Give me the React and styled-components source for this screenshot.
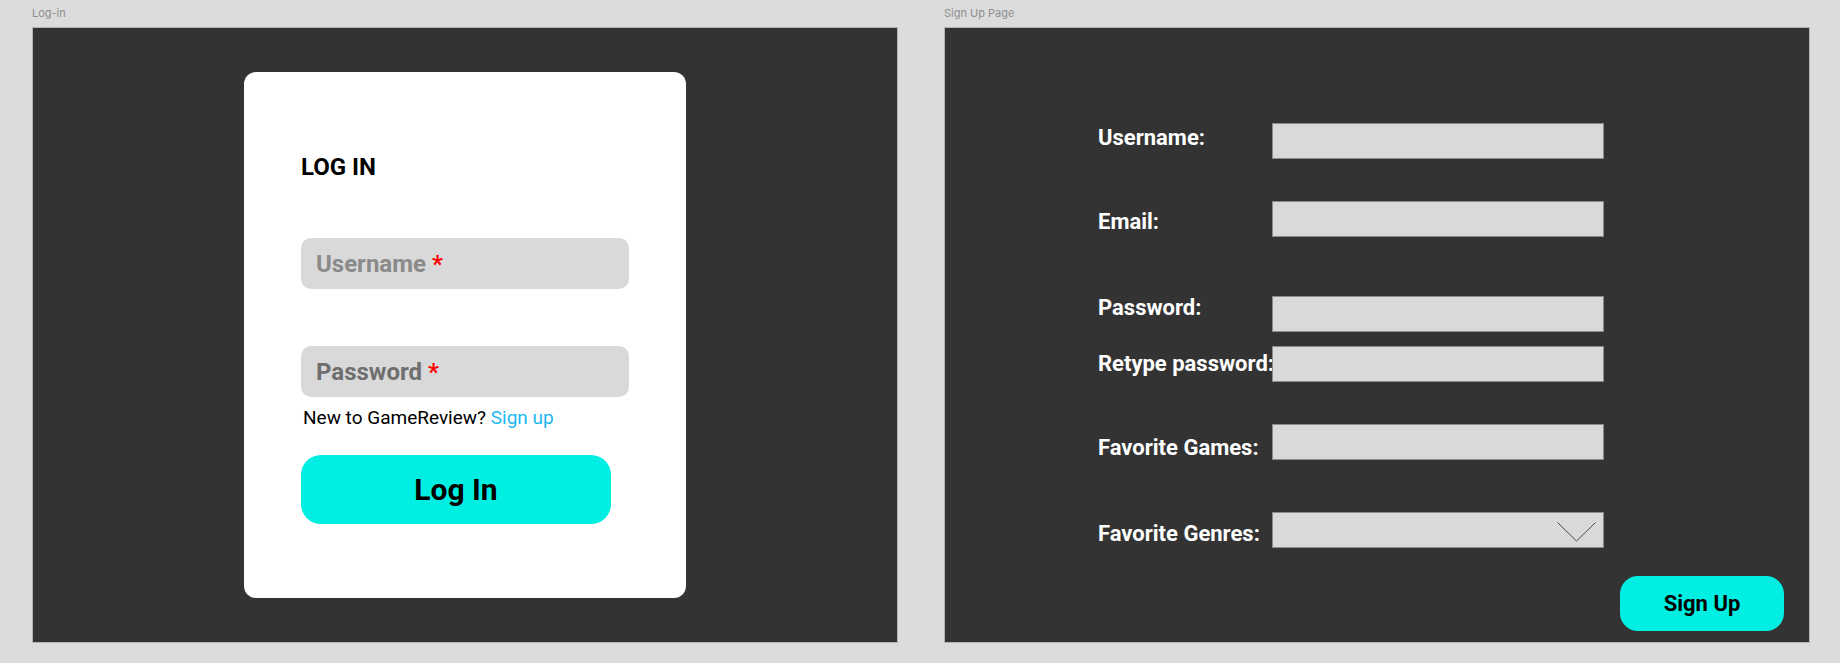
import styled, { createGlobalStyle } from 'styled-components'

const GlobalStyle = createGlobalStyle`
  html, body {
    margin: 0;
    padding: 0;
    background: #dcdcdc;
  }
  body {
    font-family: Roboto, "Liberation Sans", sans-serif;
  }
`

const signupRows = [
  { label: 'Username:', top: 95, shift: 2 },
  { label: 'Email:', top: 42, shift: 8 },
  { label: 'Password:', top: 59, shift: -1 },
  { label: 'Retype password:', top: 14, shift: 5 },
  { label: 'Favorite Games:', top: 42, shift: 11 },
  { label: 'Favorite Genres:', top: 51, shift: 9, select: true },
]

const App = () => {
  return (
    <>
      <GlobalStyle />
      <Canvas>
        <Board>
          <Caption>Log-in</Caption>
          <Frame $center>
            <Card>
              <Heading>LOG IN</Heading>
              <Field $gap={57} $tone="#8a8a8a">
                Username <Star>*</Star>
              </Field>
              <Field $gap={57} $tone="#6f6f6f">
                Password <Star>*</Star>
              </Field>
              <Hint>
                New to GameReview? <HintLink>Sign up</HintLink>
              </Hint>
              <LoginButton>Log In</LoginButton>
            </Card>
          </Frame>
        </Board>

        <Board>
          <Caption>Sign Up Page</Caption>
          <Frame>
            <Form>
              {signupRows.map(row => (
                <Row key={row.label} $top={row.top}>
                  <Label $shift={row.shift}>{row.label}</Label>
                  <Box $select={row.select}>
                    {row.select && (
                      <svg width="39" height="20" viewBox="0 0 39 20">
                        <polyline
                          points="0.5,0.5 19.5,19 38.5,0.5"
                          fill="none"
                          stroke="#4a4a4a"
                          strokeWidth="1"
                        />
                      </svg>
                    )}
                  </Box>
                </Row>
              ))}
            </Form>
            <SignUpButton>Sign Up</SignUpButton>
          </Frame>
        </Board>
      </Canvas>
    </>
  )
}

export default App

const Canvas = styled.div`
  display: flex;
  gap: 46px;
  padding-left: 32px;
`

const Board = styled.div`
  display: flex;
  flex-direction: column;
`

const Caption = styled.div`
  box-sizing: border-box;
  height: 27px;
  padding-top: 7px;
  font-family: Inter, "Liberation Sans", sans-serif;
  font-size: 11px;
  line-height: 13px;
  color: #8e8e8e;
`

const Frame = styled.div`
  box-sizing: border-box;
  width: 866px;
  height: 616px;
  background: #333333;
  border: 1px solid #b4b4b4;
  display: flex;
  flex-direction: column;
  ${p => p.$center && `
    align-items: center;
    justify-content: center;
  `}
`

const Card = styled.div`
  box-sizing: border-box;
  width: 442px;
  height: 526px;
  background: #ffffff;
  border-radius: 12px;
  padding: 81px 57px 0;
  display: flex;
  flex-direction: column;
`

const Heading = styled.div`
  font-size: 24px;
  line-height: 28px;
  font-weight: 700;
  color: #000;
`

const Field = styled.div`
  box-sizing: border-box;
  width: 328px;
  height: 51px;
  margin-top: ${p => p.$gap}px;
  padding-left: 15px;
  border-radius: 10px;
  background: #d9d9d9;
  display: flex;
  align-items: center;
  gap: 6px;
  font-size: 24px;
  font-weight: 700;
  color: ${p => p.$tone};
`

const Star = styled.span`
  color: #ff0000;
`

const Hint = styled.div`
  margin-top: 9px;
  padding-left: 2px;
  font-size: 19px;
  line-height: 24px;
  color: #000;
`

const HintLink = styled.span`
  color: #1cb8f2;
`

const LoginButton = styled.button`
  margin-top: 25px;
  width: 310px;
  height: 69px;
  border: none;
  border-radius: 20px;
  background: #00efe2;
  font-family: Roboto, "Liberation Sans", sans-serif;
  font-size: 30px;
  font-weight: 700;
  color: #000;
  padding: 0;
`

const Form = styled.div`
  display: flex;
  flex-direction: column;
  padding-left: 153px;
`

const Row = styled.div`
  display: flex;
  align-items: flex-start;
  margin-top: ${p => p.$top}px;
`

const Label = styled.div`
  width: 174px;
  margin-top: ${p => p.$shift}px;
  font-size: 22px;
  line-height: 26px;
  font-weight: 700;
  color: #ffffff;
  white-space: nowrap;
`

const Box = styled.div`
  box-sizing: border-box;
  width: 332px;
  height: 36px;
  background: #d9d9d9;
  border: 1px solid #8a8a8a;
  display: flex;
  justify-content: flex-end;
  align-items: flex-start;
  padding: 9px 7px 0 0;
`

const SignUpButton = styled.button`
  align-self: flex-end;
  margin: 28px 25px 0 0;
  width: 164px;
  height: 55px;
  border: none;
  border-radius: 18px;
  background: #00efe2;
  font-family: Roboto, "Liberation Sans", sans-serif;
  font-size: 22px;
  font-weight: 700;
  color: #000;
  padding: 0;
`
